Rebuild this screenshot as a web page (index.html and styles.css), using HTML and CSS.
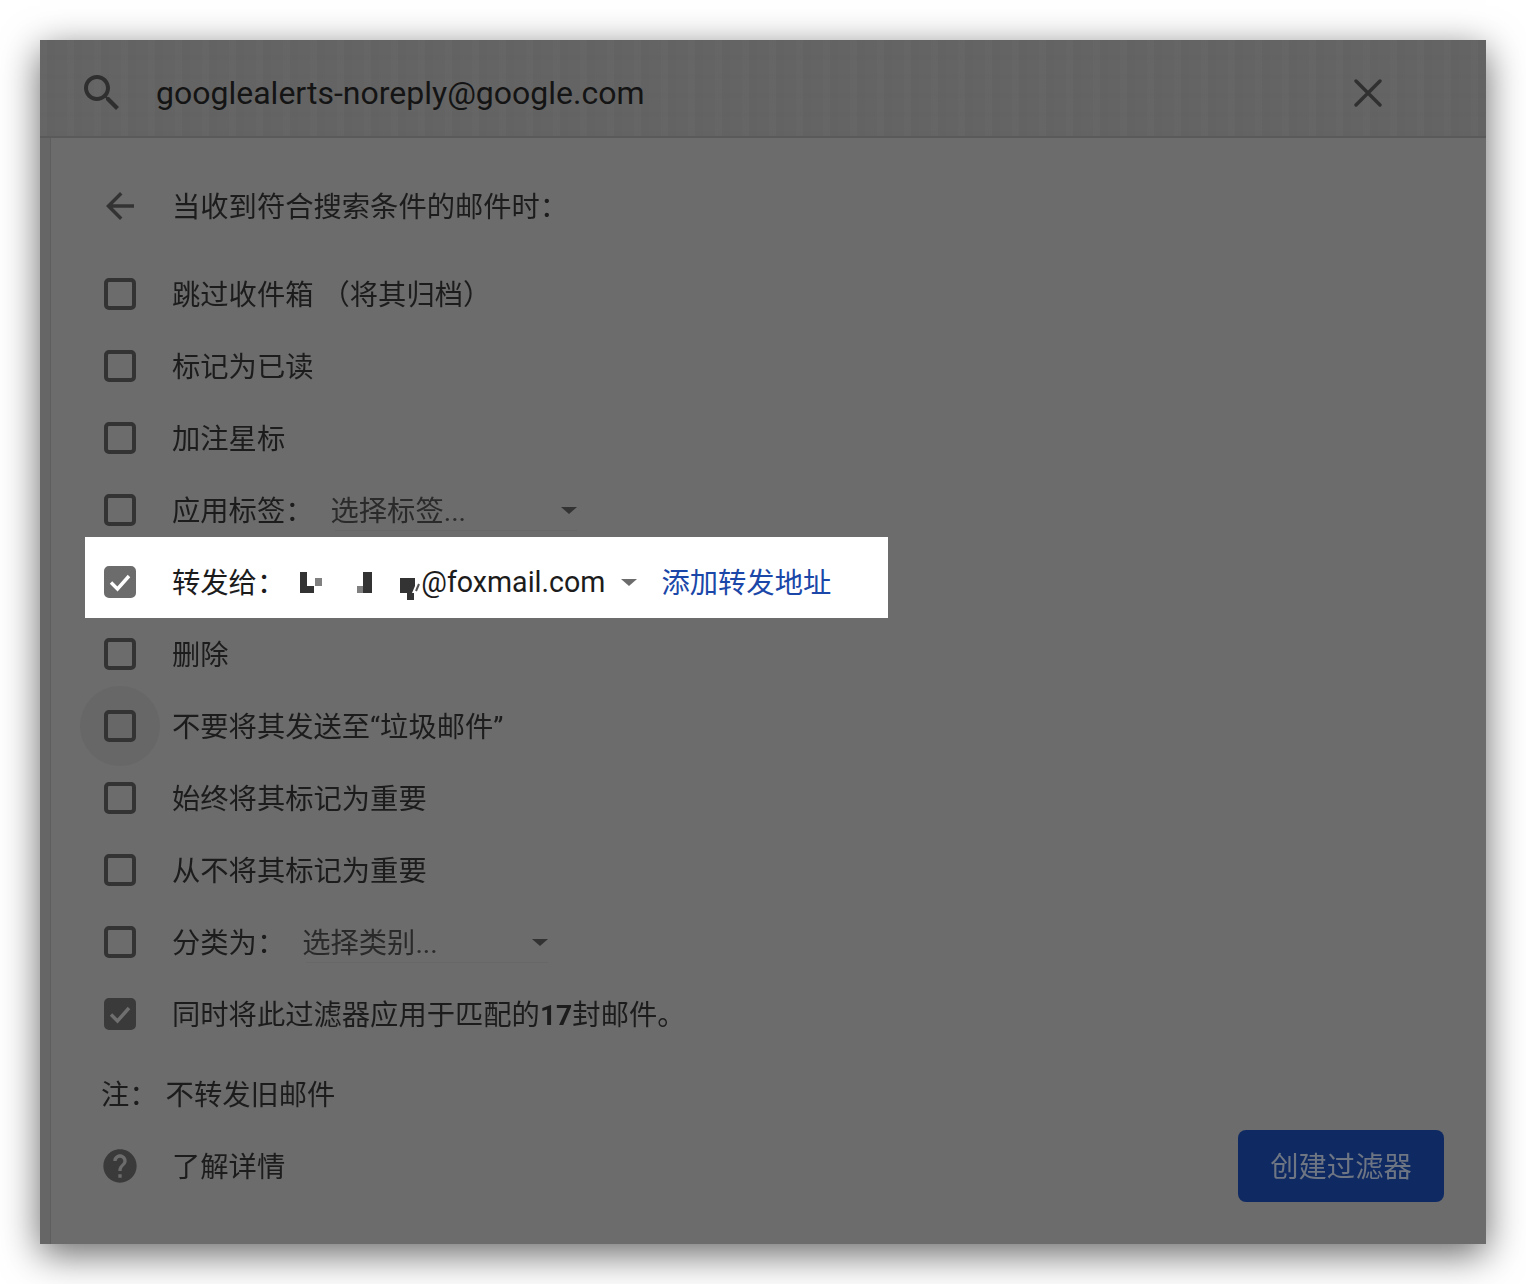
FILE: index.html
```html
<!DOCTYPE html>
<html lang="zh-CN">
<head>
<meta charset="utf-8">
<title>创建过滤器</title>
<link rel="stylesheet" href="styles.css">
</head>
<body>
<main class="window">
  <header class="search-bar">
    <svg class="icon-search" viewBox="0 0 24 24"><path d="M15.5 14h-.79l-.28-.27C15.41 12.59 16 11.11 16 9.5 16 5.91 13.09 3 9.5 3S3 5.91 3 9.5 5.91 16 9.5 16c1.61 0 3.09-.59 4.23-1.57l.27.28v.79l5 4.99L20.49 19l-4.99-5zm-6 0C7.01 14 5 11.99 5 9.5S7.01 5 9.5 5 14 7.01 14 9.5 11.99 14 9.5 14z"/></svg>
    <span class="query">googlealerts-noreply@google.com</span>
    <svg class="icon-close" viewBox="0 0 28 28"><path d="M2 2l24 24M26 2L2 26"/></svg>
  </header>
  <section class="panel">
    <div class="row title-row">
      <span class="slot"><svg class="icon-back" viewBox="0 0 24 24"><path d="M20 11H7.83l5.59-5.59L12 4l-8 8 8 8 1.41-1.41L7.83 13H20v-2z"/></svg></span>
      <span>当收到符合搜索条件的邮件时：</span>
    </div>
    <div class="list">
      <div class="row"><span class="slot"><i class="box"></i></span><span>跳过收件箱</span><span class="paren">（将其归档）</span></div>
      <div class="row"><span class="slot"><i class="box"></i></span><span>标记为已读</span></div>
      <div class="row"><span class="slot"><i class="box"></i></span><span>加注星标</span></div>
      <div class="row"><span class="slot"><i class="box"></i></span><span>应用标签：</span>
        <span class="select"><span class="select-text">选择标签...</span><i class="caret"></i></span></div>
      <div class="row highlight">
        <span class="slot"><i class="box checked"><svg viewBox="0 0 32 32"><path d="M7 16.5l6.5 6.5L25 10"/></svg></i></span>
        <span>转发给：</span>
        <span class="address">
          <svg class="mosaic" viewBox="0 0 116 34"><path class="m1" d="M1 4h7v14h7v7H1z"/><path class="m2" d="M16 10h7v8h-7z"/><path class="m1" d="M64 4h9v21h-9z"/><path class="m2" d="M58 18h6v7h-6z"/><path class="m1" d="M101 10h15v8l-3 7h-12z"/><path class="m1" d="M108 25h7v7h-7z"/><path class="slash" d="M117 23l3-7"/></svg>
          <span class="mail">@foxmail.com</span><i class="caret"></i>
        </span>
        <a class="add-link">添加转发地址</a>
      </div>
      <div class="row"><span class="slot"><i class="box"></i></span><span>删除</span></div>
      <div class="row"><span class="slot"><span class="hover-ring"></span><i class="box"></i></span><span>不要将其发送至“垃圾邮件”</span></div>
      <div class="row"><span class="slot"><i class="box"></i></span><span>始终将其标记为重要</span></div>
      <div class="row"><span class="slot"><i class="box"></i></span><span>从不将其标记为重要</span></div>
      <div class="row"><span class="slot"><i class="box"></i></span><span>分类为：</span>
        <span class="select"><span class="select-text">选择类别...</span><i class="caret"></i></span></div>
      <div class="row"><span class="slot"><i class="box checked dim"><svg viewBox="0 0 32 32"><path d="M7 16.5l6.5 6.5L25 10"/></svg></i></span><span>同时将此过滤器应用于匹配的<b>17</b>封邮件。</span></div>
    </div>
    <p class="note"><span>注：</span><span>不转发旧邮件</span></p>
    <div class="footer">
      <div class="learn">
        <span class="slot"><svg class="icon-help" viewBox="0 0 24 24"><path d="M12 2C6.48 2 2 6.48 2 12s4.48 10 10 10 10-4.48 10-10S17.52 2 12 2zm1 17h-2v-2h2v2zm2.07-7.75l-.9.92C13.45 12.9 13 13.5 13 15h-2v-.5c0-1.1.45-2.1 1.17-2.83l1.24-1.26c.37-.36.59-.86.59-1.41 0-1.1-.9-2-2-2s-2 .9-2 2H8c0-2.21 1.79-4 4-4s4 1.79 4 4c0 .88-.36 1.68-.93 2.25z"/></svg></span>
        <span>了解详情</span>
      </div>
      <button class="create" type="button">创建过滤器</button>
    </div>
  </section>
</main>
</body>
</html>
```

FILE: styles.css
```css
* { box-sizing: border-box; }

html, body { margin: 0; background: #fff; }

body {
  padding: 40px 40px 40px;
  font-family: Roboto, "Noto Sans CJK SC", sans-serif;
  font-size: 28.3px;
  color: #1c1c1c;
}

.window {
  width: 1446px;
  height: 1204px;
  display: flex;
  flex-direction: column;
  background-color: #666;
  box-shadow: 0 10px 36px rgba(0, 0, 0, .6);
  overflow: hidden;
  filter: blur(.4px);
}

.search-bar {
  flex: none;
  height: 98px;
  display: flex;
  align-items: center;
  padding: 9px 104px 0 38px;
  border-bottom: 2px solid #5a5a5a;
  background-color: #646464;
  background-image:
    repeating-linear-gradient(90deg, rgba(255, 255, 255, .01) 0 7px, rgba(0, 0, 0, .012) 7px 15px, transparent 15px 27px),
    repeating-linear-gradient(0deg, rgba(0, 0, 0, .008) 0 5px, transparent 5px 19px);
}

.icon-search { width: 48px; height: 48px; fill: #2f2f2f; flex: none; }

.query { margin-left: 30px; font-size: 32px; color: #141414; flex: 1; }

.icon-close { width: 28px; height: 28px; fill: none; stroke: #303030; stroke-width: 3.4px; stroke-linecap: round; flex: none; }

.panel {
  flex: 1;
  margin-left: 11px;
  padding: 32px 0 0;
  background: #6c6c6c;
  box-shadow: -1px 0 0 #5e5e5e;
}

.row {
  height: 72px;
  display: flex;
  align-items: center;
  padding: 0 0 3px 19px;
  white-space: nowrap;
}

.title-row { margin-left: 34px; margin-bottom: 16px; }

.list { margin-left: 34px; }

.slot {
  position: relative;
  flex: none;
  width: 68px;
  height: 40px;
  margin-top: 3px;
  display: flex;
  align-items: center;
}

.box {
  position: relative;
  display: block;
  width: 32px;
  height: 32px;
  border: 4px solid #333;
  border-radius: 5px;
}

.box svg {
  position: absolute;
  left: -4px;
  top: -4px;
  width: 32px;
  height: 32px;
  fill: none;
  stroke: #fff;
  stroke-width: 3.4px;
}

.box.checked { background: #6c6c6c; border-color: #6c6c6c; }

.box.dim { background: #3a3a3a; border-color: #3a3a3a; }

.box.dim svg { stroke: #6f6f6f; }

.hover-ring {
  position: absolute;
  left: -24px;
  top: -20px;
  width: 80px;
  height: 80px;
  border-radius: 50%;
  background: #676767;
}

.paren { margin-left: 8px; }

.icon-back { width: 42px; height: 42px; margin-left: -5px; fill: #333; }

.select {
  position: relative;
  display: flex;
  align-items: center;
  justify-content: space-between;
  width: 250px;
  height: 40px;
  margin-top: 3px;
  margin-left: 17px;
  padding-right: 4px;
  color: #2a2a2a;
  box-shadow: 0 5px 0 -4px #676767;
}

.select-text { padding-bottom: 4px; }

.caret {
  display: block;
  width: 0;
  height: 0;
  border-left: 8px solid transparent;
  border-right: 8px solid transparent;
  border-top: 7px solid #333;
}

.highlight {
  height: 81px;
  width: 803px;
  margin-top: -9px;
  padding-top: 9px;
  background: #fff;
  position: relative;
}

.address {
  display: flex;
  align-items: center;
  height: 40px;
  margin-top: 3px;
  margin-left: 14px;
}

.mosaic { width: 116px; height: 34px; flex: none; margin-top: 6px; margin-right: 6px; overflow: visible; }

.m1 { fill: #333; }

.m2 { fill: #808080; }

.slash { fill: none; stroke: #555; stroke-width: 2px; }

.mail { font-size: 28.6px; }

.address .caret { margin-left: 16px; border-top-color: #6c6c6c; }

.add-link { margin-left: 24px; color: #1a47a8; }

.note {
  margin: 8px 0 0 50px;
  height: 72px;
  padding-bottom: 3px;
  display: flex;
  align-items: center;
  gap: 8px;
}

.footer {
  display: flex;
  justify-content: space-between;
  align-items: center;
  padding: 0 42px 0 53px;
}

.learn { display: flex; align-items: center; height: 72px; padding-bottom: 3px; }

.icon-help { width: 40px; height: 40px; margin-left: -4px; fill: #3a3a3a; }

.create {
  width: 206px;
  height: 72px;
  padding: 0 0 3px;
  border: 0;
  border-radius: 8px;
  background: #0f2a63;
  color: #6f7683;
  font: inherit;
}
```
